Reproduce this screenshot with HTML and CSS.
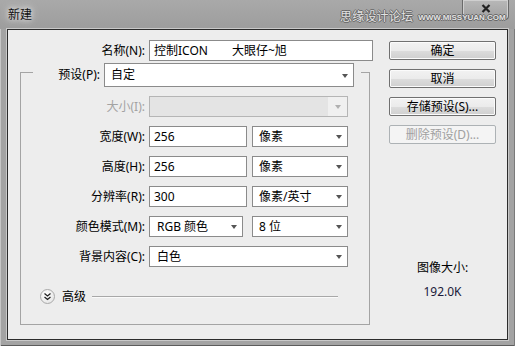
FILE: index.html
```html
<!DOCTYPE html>
<html lang="zh-CN">
<head>
<meta charset="UTF-8" />
<title>新建</title>
<link rel="stylesheet" href="styles.css">
</head>
<body>
<div class="window">
  <div class="titlebar">
    <span class="title">新建</span>
    <span class="close">
      <svg width="10" height="9" viewBox="0 0 10 9"><path d="M1.5 1 L8.5 8 M8.5 1 L1.5 8" stroke="#222" stroke-width="2.2" fill="none"/></svg>
    </span>
    <span class="watermark"><span class="wm-cn">思缘设计论坛</span><span class="wm-url">WWW.MISSYUAN.COM</span></span>
  </div>

  <div class="client">
    <div class="main">
      <div class="name-row">
        <span class="lbl">名称(N):</span>
        <div class="field w-name">控制ICON<span class="gap"></span>大眼仔~旭</div>
      </div>

      <fieldset class="group">
        <legend class="preset">
          <span class="lbl lbl-preset">预设(P):</span>
          <div class="select s-preset">自定</div>
        </legend>

        <div class="frow">
          <span class="lbl disabled">大小(I):</span>
          <div class="select s-wide is-disabled"><span class="drop"></span></div>
        </div>
        <div class="frow">
          <span class="lbl">宽度(W):</span>
          <div class="field w-num">256</div>
          <div class="select s-unit">像素</div>
        </div>
        <div class="frow">
          <span class="lbl">高度(H):</span>
          <div class="field w-num">256</div>
          <div class="select s-unit">像素</div>
        </div>
        <div class="frow">
          <span class="lbl">分辨率(R):</span>
          <div class="field w-num">300</div>
          <div class="select s-unit">像素/英寸</div>
        </div>
        <div class="frow">
          <span class="lbl">颜色模式(M):</span>
          <div class="select s-mode">RGB 颜色</div>
          <div class="select s-unit s-bits">8 位</div>
        </div>
        <div class="frow">
          <span class="lbl">背景内容(C):</span>
          <div class="select s-wide">白色</div>
        </div>

        <div class="advanced">
          <span class="adv-btn">
            <svg width="9" height="9" viewBox="0 0 9 9"><path d="M1.5 1.5 L4.5 4 L7.5 1.5 M1.5 5 L4.5 7.5 L7.5 5" stroke="#222" stroke-width="1.3" fill="none"/></svg>
          </span>
          <span class="adv-text">高级</span>
          <span class="adv-line"></span>
        </div>
      </fieldset>
    </div>

    <div class="side">
      <button class="btn">确定</button>
      <button class="btn">取消</button>
      <button class="btn">存储预设(S)...</button>
      <button class="btn" disabled>删除预设(D)...</button>
      <div class="info">
        <div>图像大小:</div>
        <div class="info-size">192.0K</div>
      </div>
    </div>
  </div>
</div>
</body>
</html>
```

FILE: styles.css
```css
* {
  box-sizing: border-box;
}
body {
  margin: 0;
  width: 515px;
  height: 346px;
  overflow: hidden;
  font-family: "Noto Sans", "Noto Sans CJK SC", sans-serif;
  font-size: 12px;
  line-height: 16px;
  color: #000;
}
.window {
  position: relative;
  width: 515px;
  height: 346px;
  background: #a3a3a3;
  padding: 0 7px 6px 7px;
  display: flex;
  flex-direction: column;
  box-shadow: inset 1px 0 #c6c6c6, inset -1px 0 #7a7a7a, inset 0 -1px #5c5c5c;
}
.titlebar {
  height: 29px;
  margin: 0 -7px;
  padding-left: 8px;
  display: flex;
  align-items: center;
  background: linear-gradient(#a9a9a9, #9d9d9d);
}
.title {
  color: #111;
  text-shadow: 0 0 5px #e8e8e8, 0 0 8px #e8e8e8;
}
.watermark {
  position: absolute;
  left: 340px;
  top: 7px;
  z-index: 2;
  display: flex;
  align-items: center;
  color: #e2e2e2;
  text-shadow: -1px 0 #666, 1px 0 #666, 0 -1px #666, 0 1px #666;
}
.wm-cn {
  font-size: 12px;
  letter-spacing: 0.2px;
}
.wm-url {
  margin-left: 5px;
  margin-top: 3px;
  font-family: "Liberation Sans", sans-serif;
  font-size: 8px;
  font-weight: bold;
}
.close {
  position: absolute;
  top: 0;
  right: 6px;
  width: 47px;
  height: 20px;
  display: flex;
  align-items: center;
  justify-content: center;
  padding-bottom: 2px;
  background: linear-gradient(#b8b8b8, #a0a0a0);
  border: 1px solid #6a6a6a;
  border-top: none;
  border-radius: 0 0 4px 4px;
  box-shadow: inset 0 0 0 1px #cfcfcf;
}
.client {
  flex: 1;
  display: flex;
  background: #ededed;
  border: 1px solid #2c2c2c;
  box-shadow: 0 0 0 1px #c9c9c9;
}
.main {
  width: 362px;
  padding-top: 10px;
}
.name-row,
.frow {
  display: flex;
  height: 21px;
}
.frow {
  margin-top: 9px;
}
.lbl {
  width: 137px;
  margin-right: 4px;
  text-align: right;
  line-height: 21px;
  white-space: nowrap;
  flex-shrink: 0;
}
.group .lbl {
  width: 124px;
}
.group .lbl-preset {
  width: 67px;
  line-height: 24px;
}
.lbl.disabled {
  color: #a3a3a3;
}
.field,
.select {
  height: 21px;
  background: #fff;
  border: 1px solid #8b8b8b;
  line-height: 19px;
  white-space: nowrap;
  flex-shrink: 0;
}
.field {
  padding-left: 4px;
}
.gap {
  display: inline-block;
  width: 24px;
}
.select {
  display: flex;
  align-items: center;
  justify-content: space-between;
  padding: 0 5px 0 6px;
}
.select::after {
  content: "";
  border-left: 3px solid transparent;
  border-right: 3px solid transparent;
  border-top: 4px solid #555;
  margin-top: 1px;
}
.select.is-disabled {
  background: #e4e4e4;
  border-color: #b5b5b5;
  padding: 0;
  justify-content: flex-end;
}
.select.is-disabled::after {
  display: none;
}
.drop {
  width: 19px;
  height: 19px;
  background: #f0f0f0;
  display: flex;
  align-items: center;
  justify-content: center;
}
.drop::after {
  content: "";
  border-left: 3px solid transparent;
  border-right: 3px solid transparent;
  border-top: 4px solid #b0b0b0;
}
.w-name {
  width: 224px;
}
.w-num {
  width: 98px;
  margin-right: 5px;
}
.s-unit {
  width: 96px;
}
.s-mode {
  width: 94px;
  padding-left: 7px;
  margin-right: 9px;
}
.s-wide {
  width: 199px;
  padding-left: 7px;
}
.group {
  width: 350px;
  margin: -4px 0 0 12px;
  padding: 0 0 20px 0;
  min-width: 0;
  border: 1px solid #a4a4a4;
}
.preset {
  display: flex;
  align-items: center;
  margin-left: 12px;
  padding: 6px 7px 0 0;
}
.s-preset {
  width: 250px;
  height: 24px;
  line-height: 22px;
}
.advanced {
  display: flex;
  align-items: center;
  height: 15px;
  margin: 22px 0 0 19px;
}
.adv-btn {
  width: 15px;
  height: 15px;
  border-radius: 50%;
  border: 1px solid #a9a9a9;
  background: radial-gradient(circle at 40% 35%, #ffffff, #e0e0e0);
  display: flex;
  align-items: center;
  justify-content: center;
}
.adv-text {
  margin-left: 7px;
}
.adv-line {
  width: 246px;
  height: 2px;
  margin-left: 6px;
  border-top: 1px solid #a8a8a8;
  border-bottom: 1px solid #fafafa;
}
.side {
  padding: 11px 0 0 19px;
  display: flex;
  flex-direction: column;
}
.btn {
  width: 107px;
  height: 19px;
  margin-bottom: 9px;
  padding: 0;
  font-family: inherit;
  font-size: 12px;
  line-height: 16px;
  color: #000;
  background: linear-gradient(#f2f2f2 0%, #ebebeb 50%, #dddddd 51%, #cfcfcf 100%);
  border: 1px solid #707070;
  border-radius: 2px;
  box-shadow: inset 0 0 0 1px #fbfbfb;
}
.btn:disabled {
  color: #a0a0a0;
  background: #f4f4f4;
  border-color: #adb2b5;
  box-shadow: none;
}
.info {
  width: 107px;
  margin-top: 107px;
  text-align: center;
}
.info-size {
  margin-top: 8px;
  color: #1a1a3a;
}
```
